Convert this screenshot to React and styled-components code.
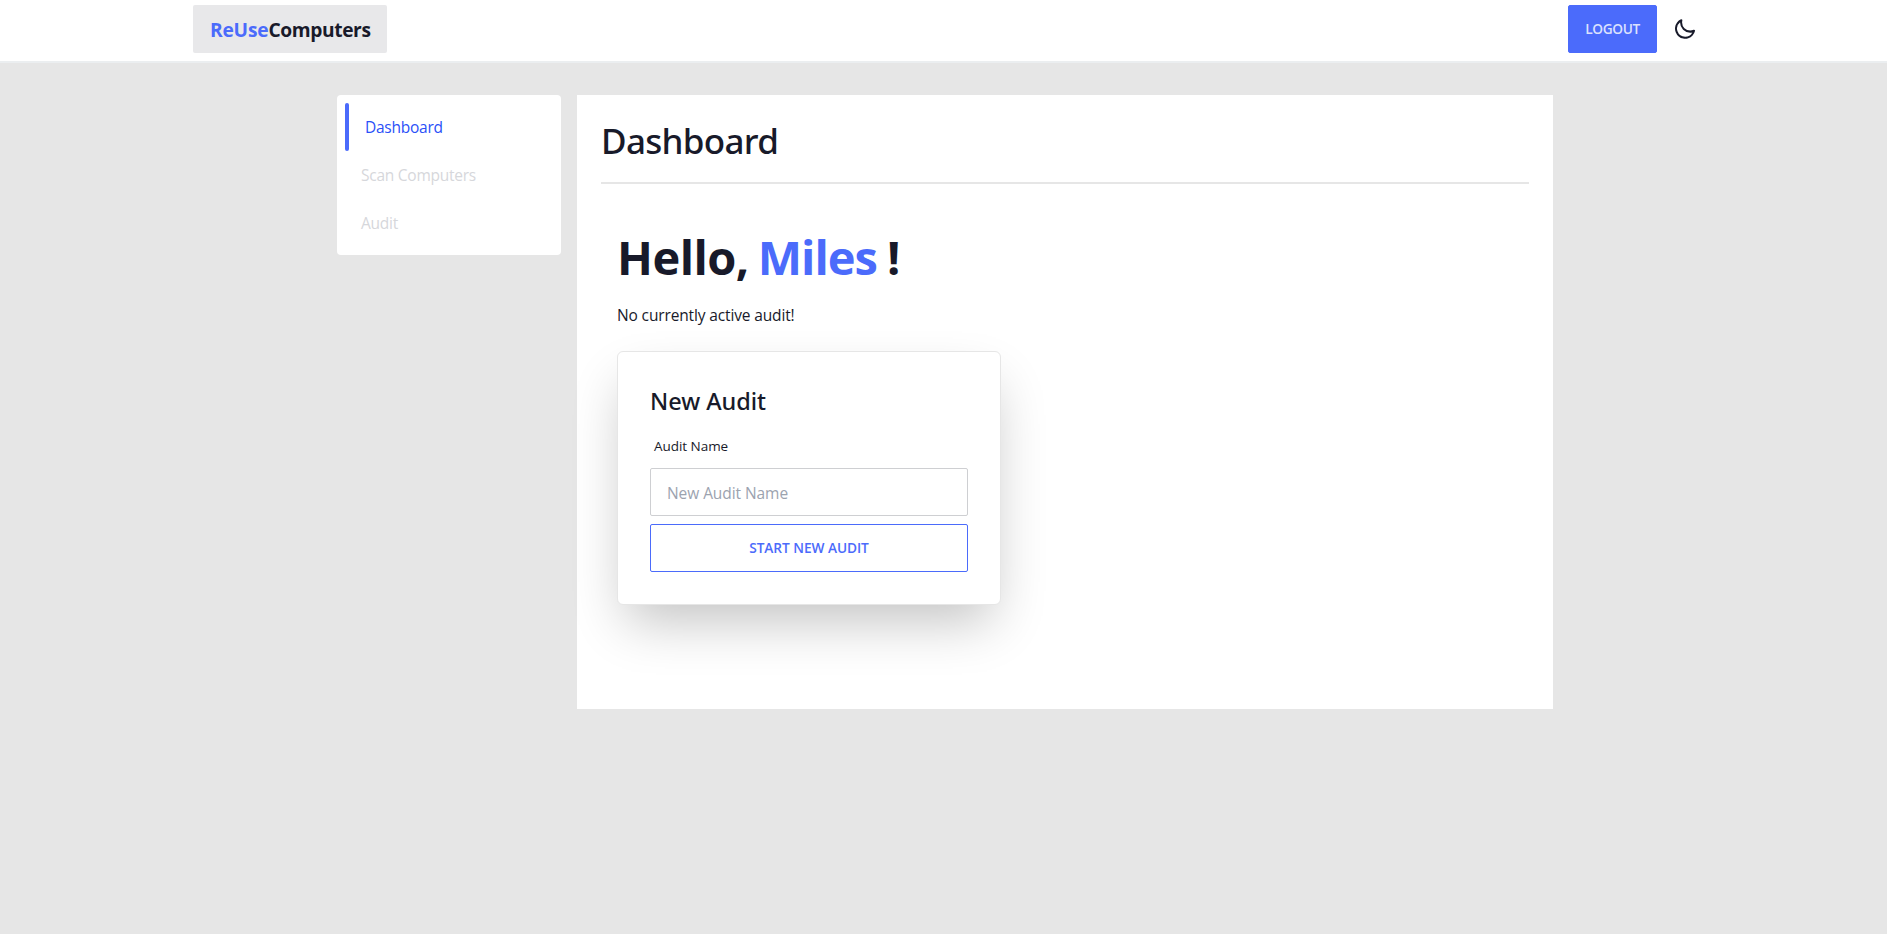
import React from "react";
import styled, { createGlobalStyle } from "styled-components";

const ink = "#181a2a";
const primary = "#4b6bfb";
const line = "#e6e6e6";

const GlobalStyle = createGlobalStyle`
  *, *::before, *::after { box-sizing: border-box; }
  body {
    margin: 0;
    background: #e6e6e6;
    color: ${ink};
    font-family: "Open Sans", "Noto Sans", sans-serif;
    font-size: 15.5px;
    line-height: 24px;
  }
  h1, h2, p { margin: 0; }
`;

const Header = styled.header`
  height: 63px;
  padding: 5px 174px 0 193px;
  display: flex;
  justify-content: space-between;
  align-items: flex-start;
  background: #fff;
  border-bottom: 2px solid #ebeef0;
`;

const Brand = styled.a`
  height: 48px;
  width: 194px;
  padding: 2px 0 0 17px;
  display: flex;
  align-items: center;
  border-radius: 2px;
  background: #e8e8ea;
  font-size: 19.2px;
  font-weight: 700;
  letter-spacing: -0.38px;
`;

const Accent = styled.span`
  color: ${primary};
  letter-spacing: -0.2px;
`;

const HeaderActions = styled.div`
  display: flex;
  align-items: center;
`;

const Button = styled.button`
  height: 48px;
  width: ${(p) => p.$width || "100%"};
  padding: 0;
  border: 1px solid ${primary};
  border-radius: 2px;
  background: ${(p) => (p.$filled ? primary : "transparent")};
  color: ${(p) => (p.$filled ? "#dbe1fe" : primary)};
  font: 600 13.7px/20px "Open Sans", "Noto Sans", sans-serif;
  letter-spacing: ${(p) => (p.$filled ? "-0.35px" : "-0.05px")};
  text-transform: uppercase;
`;

const ThemeToggle = styled.button`
  width: 56px;
  height: 48px;
  padding: 0;
  display: grid;
  place-items: center;
  border: 0;
  background: none;
  color: ${ink};
`;

const Layout = styled.div`
  padding: 32px 334px 0 337px;
  display: flex;
  align-items: flex-start;
  gap: 16px;
`;

const Sidebar = styled.nav`
  width: 224px;
  padding: 8px;
  border-radius: 4px;
  background: #fff;
`;

const NavItem = styled.a`
  height: 48px;
  padding-left: ${(p) => (p.$active ? 20 : 16)}px;
  display: flex;
  align-items: center;
  position: relative;
  letter-spacing: -0.25px;
  color: ${(p) => (p.$active ? "#2a50f8" : "#d6d7db")};

  &::before {
    content: "";
    display: ${(p) => (p.$active ? "block" : "none")};
    position: absolute;
    inset: 0 auto 0 0;
    width: 4px;
    border-radius: 2px;
    background: ${primary};
  }
`;

const Main = styled.main`
  flex: 1;
  height: 614px;
  padding: 24px;
  background: #fff;
`;

const PageTitle = styled.h1`
  height: 65px;
  padding-top: 2px;
  margin-bottom: 49px;
  border-bottom: 2px solid ${line};
  font-family: "Noto Sans", sans-serif;
  font-size: 35px;
  line-height: 40px;
  font-weight: 500;
  letter-spacing: -0.7px;
`;

const Content = styled.section`
  padding: 0 16px;
`;

const Greeting = styled.h2`
  display: flex;
  margin-bottom: 22px;
  font-size: 47px;
  line-height: 48px;
  font-weight: 700;
  letter-spacing: -0.55px;
`;

const UserName = styled.span`
  margin: 0 10px 0 9px;
  color: ${primary};
  letter-spacing: -0.95px;
`;

const Status = styled.p`
  letter-spacing: -0.14px;
`;

const Card = styled.form`
  width: 384px;
  height: 254px;
  margin-top: 24px;
  padding: 33px 32px 32px;
  border: 1px solid ${line};
  border-radius: 6px;
  background: #fff;
  box-shadow: 0 25px 50px -9px rgba(0, 0, 0, 0.24);
`;

const CardTitle = styled.h2`
  font-family: "Noto Sans", sans-serif;
  font-size: 23.5px;
  line-height: 32px;
  font-weight: 500;
  letter-spacing: -0.05px;
`;

const Label = styled.label`
  display: block;
  margin: 19px 0 12px;
  padding-left: 4px;
  font-size: 13.5px;
  line-height: 20px;
  letter-spacing: -0.04px;
`;

const Input = styled.input`
  display: block;
  width: 100%;
  height: 48px;
  margin-bottom: 8px;
  padding: 2px 16px 0;
  border: 1px solid #cecfd2;
  border-radius: 2px;
  background: #fff;
  font: 400 15.5px/24px "Open Sans", "Noto Sans", sans-serif;
  letter-spacing: -0.07px;
  &::placeholder { color: #9ca3af; opacity: 1; }
`;

function MoonIcon() {
  return (
    <svg width="24" height="24" viewBox="0 0 24 24" fill="currentColor">
      <path d="M21.64,13a1,1,0,0,0-1.05-.14,8.05,8.05,0,0,1-3.37.73A8.15,8.15,0,0,1,9.08,5.49a8.59,8.59,0,0,1,.25-2A1,1,0,0,0,8,2.36,10.14,10.14,0,1,0,22,14.05,1,1,0,0,0,21.64,13Zm-9.5,6.69A8.14,8.14,0,0,1,7.08,5.22v.27A10.15,10.15,0,0,0,17.22,15.63a9.79,9.79,0,0,0,2.1-.22A8.11,8.11,0,0,1,12.14,19.73Z" />
    </svg>
  );
}

export default function App() {
  return (
    <>
      <GlobalStyle />
      <Header>
        <Brand>
          <Accent>ReUse</Accent>Computers
        </Brand>
        <HeaderActions>
          <Button $filled $width="89px">Logout</Button>
          <ThemeToggle aria-label="Toggle theme">
            <MoonIcon />
          </ThemeToggle>
        </HeaderActions>
      </Header>
      <Layout>
        <Sidebar>
          <NavItem $active>Dashboard</NavItem>
          <NavItem>Scan Computers</NavItem>
          <NavItem>Audit</NavItem>
        </Sidebar>
        <Main>
          <PageTitle>Dashboard</PageTitle>
          <Content>
            <Greeting>
              Hello,<UserName>Miles</UserName>!
            </Greeting>
            <Status>No currently active audit!</Status>
            <Card>
              <CardTitle>New Audit</CardTitle>
              <Label htmlFor="audit-name">Audit Name</Label>
              <Input id="audit-name" placeholder="New Audit Name" />
              <Button type="button">Start new audit</Button>
            </Card>
          </Content>
        </Main>
      </Layout>
    </>
  );
}
